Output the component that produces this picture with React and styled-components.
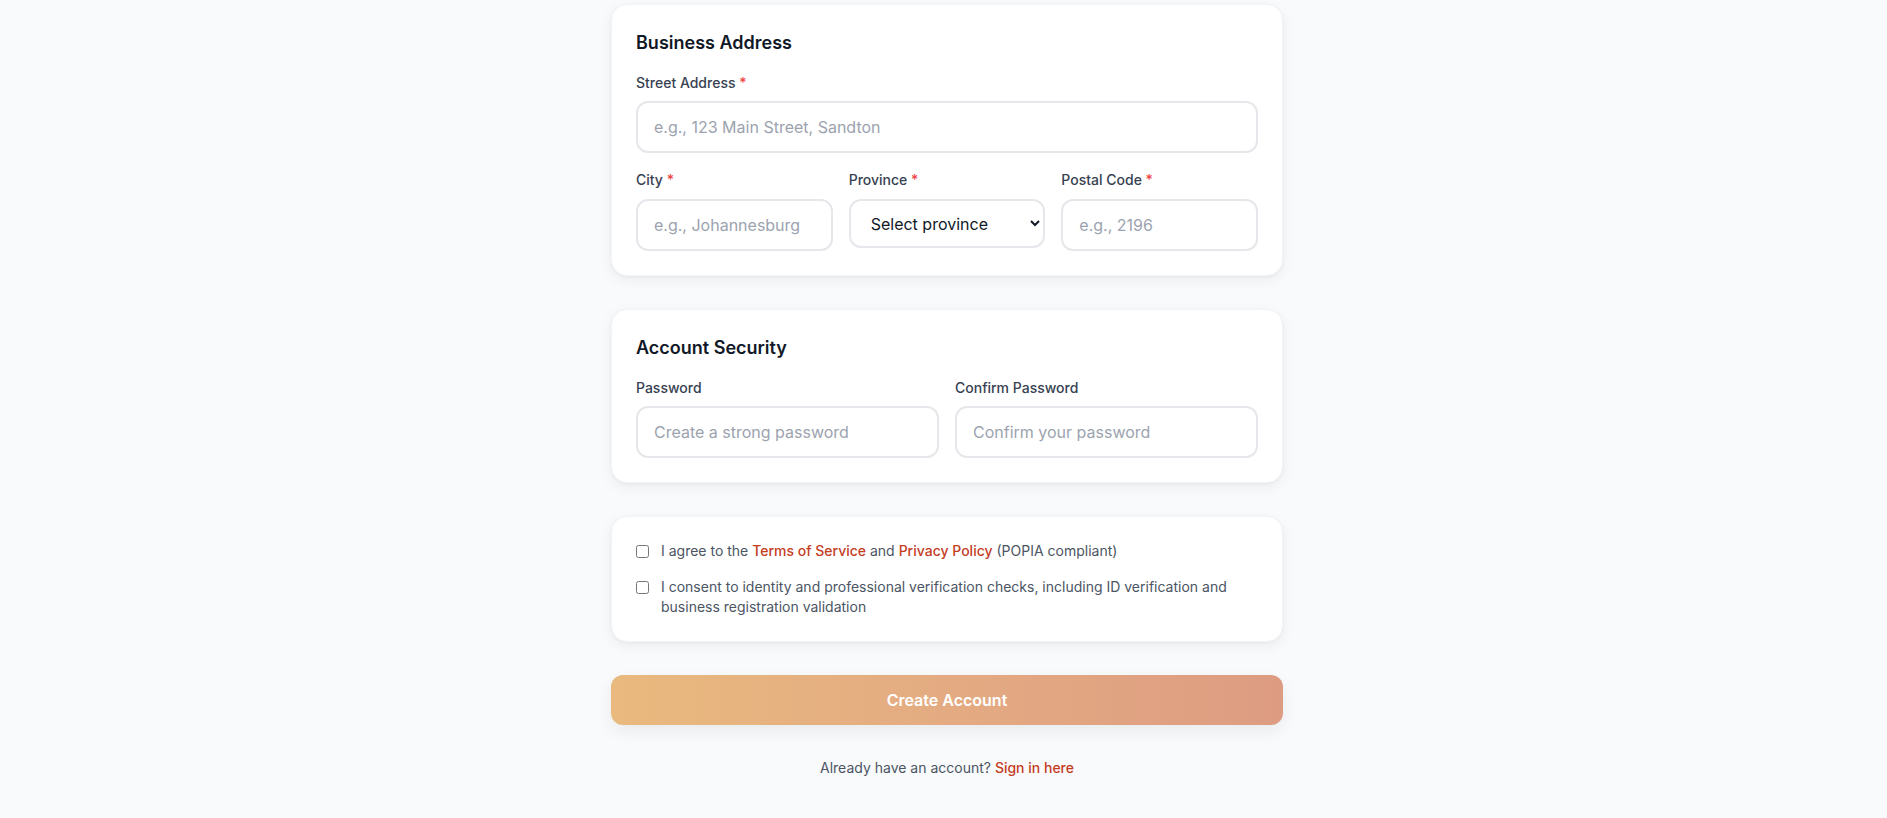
import styled, { createGlobalStyle } from 'styled-components';

const Global = createGlobalStyle`
    * {
        box-sizing: border-box;
    }
    body {
        margin: 0;
        background: #f9fafb;
        font-family: Inter, 'Noto Sans', sans-serif;
        color: #111827;
    }
`;

const S = {};

S.Page = styled.div`
    display: flex;
    justify-content: center;
    padding: 4px 0 40px 7px;
`;

S.Form = styled.form`
    width: 672px;
    display: flex;
    flex-direction: column;
    gap: 33px;
`;

S.Card = styled.section`
    background: #fff;
    border: 1px solid #f3f4f6;
    border-radius: 16px;
    padding: 24px;
    box-shadow: 0 4px 14px rgba(17, 24, 39, 0.06), 0 1px 3px rgba(17, 24, 39, 0.04);
`;

S.Title = styled.h2`
    margin: 0 0 16px;
    font-size: 18px;
    line-height: 28px;
    font-weight: 600;
    color: #111827;
`;

S.Stack = styled.div`
    display: flex;
    flex-direction: column;
    gap: 17px;
`;

S.Grid = styled.div`
    display: grid;
    grid-template-columns: repeat(${(p) => p.$cols}, 1fr);
    gap: 16px;
`;

S.Field = styled.div`
    display: flex;
    flex-direction: column;
`;

S.Label = styled.label`
    display: block;
    margin-bottom: ${(p) => (p.$tight ? '8px' : '9px')};
    font-size: 14px;
    line-height: 20px;
    font-weight: 500;
    color: #374151;

    > span {
        color: #ef4444;
    }
`;

S.Input = styled.input`
    width: 100%;
    height: 52px;
    padding: 12px 16px;
    border: 2px solid #e5e7eb;
    border-radius: 12px;
    font-family: inherit;
    font-size: 16px;
    line-height: 24px;
    color: #111827;
    background: #fff;
    outline: none;

    &::placeholder {
        color: #9ca3af;
        opacity: 1;
    }
`;

S.Select = styled.select`
    width: 100%;
    height: 49px;
    padding: 0 12px 0 16px;
    border: 2px solid #e5e7eb;
    border-radius: 12px;
    font-family: inherit;
    font-size: 16px;
    color: #111827;
    background: #fff;
    outline: none;
`;

S.Checks = styled.div`
    display: flex;
    flex-direction: column;
    gap: 16px;
`;

S.Check = styled.label`
    display: flex;
    align-items: flex-start;
    gap: 12px;
    font-size: 14px;
    line-height: 20px;
    color: #4b5563;

    input {
        width: 13px;
        height: 13px;
        margin: 4px 0 0;
        flex-shrink: 0;
    }

    a {
        color: #c43d1f;
        font-weight: 500;
        text-decoration: none;
    }
`;

S.Submit = styled.button`
    width: 100%;
    height: 50px;
    border: none;
    border-radius: 12px;
    background: linear-gradient(90deg, #e9b97e 0%, #e4ab82 50%, #dd9c82 100%);
    color: #fff;
    font-family: inherit;
    font-size: 16px;
    font-weight: 600;
    box-shadow: 0 6px 16px rgba(17, 24, 39, 0.07);
    cursor: pointer;
`;

S.Footer = styled.p`
    margin: 0;
    text-align: center;
    font-size: 14px;
    line-height: 20px;
    color: #4b5563;

    a {
        color: #c43d1f;
        font-weight: 500;
        text-decoration: none;
    }
`;

const Field = ({ label, required, tight, children }) => (
    <S.Field>
        <S.Label $tight={tight}>
            {label}
            {required && <span> *</span>}
        </S.Label>
        {children}
    </S.Field>
);

const App = () => {
    return (
        <S.Page>
            <Global />
            <S.Form onSubmit={(e) => e.preventDefault()}>
                <S.Card>
                    <S.Title>Business Address</S.Title>
                    <S.Stack>
                        <Field label='Street Address' required tight>
                            <S.Input placeholder='e.g., 123 Main Street, Sandton' />
                        </Field>
                        <S.Grid $cols={3}>
                            <Field label='City' required>
                                <S.Input placeholder='e.g., Johannesburg' />
                            </Field>
                            <Field label='Province' required>
                                <S.Select defaultValue=''>
                                    <option value=''>Select province</option>
                                    <option>Gauteng</option>
                                    <option>Western Cape</option>
                                    <option>KwaZulu-Natal</option>
                                </S.Select>
                            </Field>
                            <Field label='Postal Code' required>
                                <S.Input placeholder='e.g., 2196' />
                            </Field>
                        </S.Grid>
                    </S.Stack>
                </S.Card>

                <S.Card>
                    <S.Title>Account Security</S.Title>
                    <S.Grid $cols={2}>
                        <Field label='Password' tight>
                            <S.Input type='password' placeholder='Create a strong password' />
                        </Field>
                        <Field label='Confirm Password' tight>
                            <S.Input type='password' placeholder='Confirm your password' />
                        </Field>
                    </S.Grid>
                </S.Card>

                <S.Card>
                    <S.Checks>
                        <S.Check>
                            <input type='checkbox' />
                            <span>
                                I agree to the <a href='#terms'>Terms of Service</a> and{' '}
                                <a href='#privacy'>Privacy Policy</a> (POPIA compliant)
                            </span>
                        </S.Check>
                        <S.Check>
                            <input type='checkbox' />
                            <span>
                                I consent to identity and professional verification checks, including ID verification and
                                business registration validation
                            </span>
                        </S.Check>
                    </S.Checks>
                </S.Card>

                <S.Submit type='submit'>Create Account</S.Submit>

                <S.Footer>
                    Already have an account? <a href='#signin'>Sign in here</a>
                </S.Footer>
            </S.Form>
        </S.Page>
    );
};

export default App;
